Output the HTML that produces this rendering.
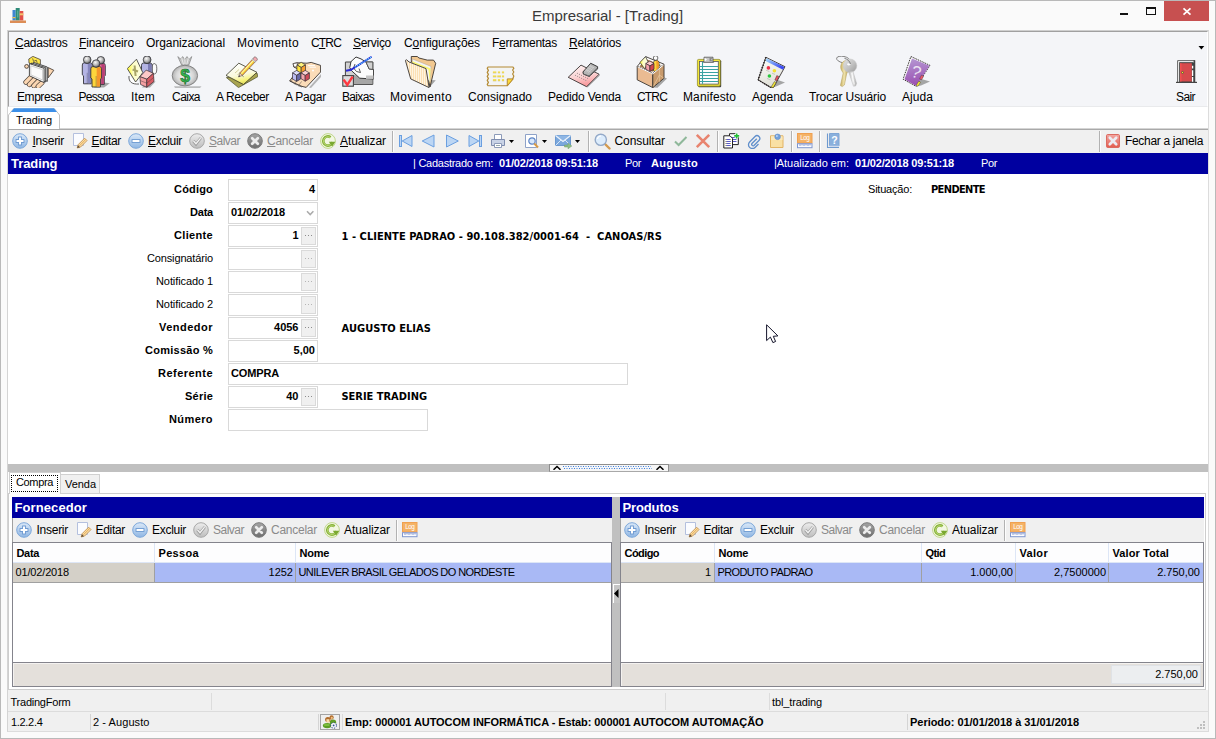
<!DOCTYPE html>
<html lang="pt-BR"><head><meta charset="utf-8"><title>Empresarial - [Trading]</title>
<style>
html,body{margin:0;padding:0}
body{width:1216px;height:739px;overflow:hidden;background:#fafafa;position:relative;font-family:"Liberation Sans",sans-serif}
#w div,#w span.t,#w svg{position:absolute}
#w div{box-sizing:border-box}
span.t{white-space:pre;display:block}
u{text-decoration:underline;text-underline-offset:1px}
</style></head>
<body><div id="w">
<svg width="0" height="0" style="left:0;top:0"><defs>
<linearGradient id="gBlue" x1="0" y1="0" x2="0" y2="1"><stop offset="0" stop-color="#dbe9f8"/><stop offset="1" stop-color="#8fb6e3"/></linearGradient>
<linearGradient id="gGray" x1="0" y1="0" x2="0" y2="1"><stop offset="0" stop-color="#ededed"/><stop offset="1" stop-color="#bdbdbd"/></linearGradient>
<linearGradient id="gDark" x1="0" y1="0" x2="0" y2="1"><stop offset="0" stop-color="#a5a5a5"/><stop offset="1" stop-color="#6d6d6d"/></linearGradient>
<linearGradient id="gGreen" x1="0" y1="0" x2="0" y2="1"><stop offset="0" stop-color="#c9e08a"/><stop offset="1" stop-color="#7fae2e"/></linearGradient>
<linearGradient id="gRed" x1="0" y1="0" x2="0" y2="1"><stop offset="0" stop-color="#f2a8a4"/><stop offset="1" stop-color="#e25c4e"/></linearGradient>
<radialGradient id="gHead" cx="0.4" cy="0.35" r="0.7"><stop offset="0" stop-color="#fafafa"/><stop offset="0.55" stop-color="#b0b0b0"/><stop offset="1" stop-color="#4a4a4a"/></radialGradient>
<radialGradient id="gBag" cx="0.5" cy="0.5" r="0.6"><stop offset="0" stop-color="#fbfbfb"/><stop offset="0.55" stop-color="#d8d8d8"/><stop offset="1" stop-color="#9a9a9a"/></radialGradient>
<linearGradient id="gPaperY" x1="0" y1="0.5" x2="1" y2="0.5"><stop offset="0" stop-color="#fdf828"/><stop offset="0.4" stop-color="#fdfdc8"/><stop offset="1" stop-color="#fdfde4"/></linearGradient>
<linearGradient id="gNote" x1="0.3" y1="0" x2="0.6" y2="1"><stop offset="0" stop-color="#ffffff"/><stop offset="0.55" stop-color="#fafadc"/><stop offset="0.82" stop-color="#f6f274"/><stop offset="1" stop-color="#d4d058"/></linearGradient>
<linearGradient id="gPink" x1="0.3" y1="0" x2="0.6" y2="1"><stop offset="0" stop-color="#fdf0f0"/><stop offset="0.5" stop-color="#fbd4d4"/><stop offset="1" stop-color="#f88e92"/></linearGradient>
<linearGradient id="gPage" x1="0.3" y1="0" x2="0.6" y2="1"><stop offset="0" stop-color="#fbfbf6"/><stop offset="1" stop-color="#deded6"/></linearGradient>
<linearGradient id="gBand" x1="0" y1="0" x2="1" y2="0.5"><stop offset="0" stop-color="#a8dcfa"/><stop offset="1" stop-color="#3a4af4"/></linearGradient>
<linearGradient id="gPurple" x1="0.4" y1="0" x2="0.5" y2="1"><stop offset="0" stop-color="#b496d2"/><stop offset="1" stop-color="#9a4eb0"/></linearGradient>
<linearGradient id="gGold" x1="0" y1="0" x2="1" y2="0"><stop offset="0" stop-color="#c8b060"/><stop offset="0.5" stop-color="#f0e4b0"/><stop offset="1" stop-color="#bca454"/></linearGradient>
<linearGradient id="gSilver" x1="0" y1="0" x2="1" y2="1"><stop offset="0" stop-color="#e4e4e4"/><stop offset="0.55" stop-color="#c0c0c0"/><stop offset="1" stop-color="#9a9a9a"/></linearGradient>
<linearGradient id="gSilver2" x1="0" y1="0" x2="1" y2="0"><stop offset="0" stop-color="#b4b4b4"/><stop offset="0.5" stop-color="#f0f0f0"/><stop offset="1" stop-color="#a8a8a8"/></linearGradient>
<pattern id="pFolder" width="2" height="2" patternUnits="userSpaceOnUse"><rect width="2" height="2" fill="#fef4e0"/><rect width="1" height="2" fill="#fce0b4"/></pattern>
</defs></svg>
<div style="left:0px;top:0px;width:1216px;height:739px;background:#fafafa;border:1px solid #b9b9b9;"></div>
<div style="left:7px;top:30px;width:1202px;height:702px;background:#fff;border:1px solid #dcdcdc;border-top-color:#cfcfcf;border-left-color:#d4d4d4;"></div>
<svg style="left:10px;top:7px" width="16" height="16" viewBox="0 0 16 16"><rect x="2.5" y="3" width="3.2" height="10.5" fill="#3f86d2"/><rect x="2.5" y="10" width="3.2" height="1.2" fill="#f2c14e"/><rect x="5.7" y="1" width="4" height="12.5" fill="#2e8b78"/><rect x="7.4" y="3.5" width="0.8" height="7" fill="#6fc0ad"/><rect x="9.7" y="4" width="3.6" height="9.5" fill="#e2504a"/><rect x="9.7" y="6.3" width="3.6" height="2" fill="#f4c16a"/><rect x="0" y="13.5" width="16" height="2.5" fill="#dc8d55"/></svg>
<div style="left:1120px;top:13px;width:8px;height:2px;background:#111;"></div>
<div style="left:1146px;top:7px;width:10px;height:8px;border:1px solid #111;border-top-width:2px;"></div>
<div style="left:1164px;top:1px;width:45px;height:20px;background:#c75050;"></div>
<svg style="left:1182px;top:7px" width="10" height="9" viewBox="0 0 10 9"><path d="M1.500 1.300L8.500 7.700M8.500 1.300L1.500 7.700" stroke="#fff" stroke-width="1.700" fill="none"/></svg>
<div style="left:8px;top:31px;width:1200px;height:76px;background:#f4f5f8;border:1px solid #a0a0a0;border-right-color:#fff;border-bottom-color:#e9eaec;"></div>
<svg style="left:1198px;top:46px" width="7" height="4" viewBox="0 0 7 4"><path d="M0.500 0H6.300L3.400 3.500Z" fill="#000"/></svg>
<svg style="left:23px;top:56px" width="32" height="32" viewBox="0 0 32 32"><path d="M7.5 21.5L2.8 26.2" stroke="#4a4038" stroke-width="4.9" stroke-linecap="round"/><path d="M7.5 21.5L2.8 26.2" stroke="#fbd6b2" stroke-width="3.6" stroke-linecap="round"/><path d="M11.5 23.2L6.3 28.6" stroke="#4a4038" stroke-width="4.9" stroke-linecap="round"/><path d="M11.5 23.2L6.3 28.6" stroke="#fbd6b2" stroke-width="3.6" stroke-linecap="round"/><path d="M15.5 25L10.8 29.8" stroke="#4a4038" stroke-width="4.9" stroke-linecap="round"/><path d="M15.5 25L10.8 29.8" stroke="#fbd6b2" stroke-width="3.6" stroke-linecap="round"/><path d="M19 26.8L15.2 30.4" stroke="#4a4038" stroke-width="4.9" stroke-linecap="round"/><path d="M19 26.8L15.2 30.4" stroke="#fbd6b2" stroke-width="3.6" stroke-linecap="round"/><circle cx="3.6" cy="10.4" r="1.9" fill="#fbd6b2" stroke="#4a4038" stroke-width="0.9"/><path d="M25.2 11.6L30.8 14.3L25.2 21.8Z" fill="#fbd6b2" stroke="#4a4038" stroke-width="0.9"/><path d="M5.8 3L9.9 0.4L17.4 3.6V8L13.6 9.6L6 7Z" fill="#fde64a" stroke="#4a4038" stroke-width="0.8"/><path d="M9.6 2.4L10.6 5.4L13.3 4.2L14.2 6.8" fill="none" stroke="#4a4038" stroke-width="0.7"/><path d="M10.4 6.3L24.3 11V25.4L10.4 18.6Z" fill="#e4e4e4" stroke="#3a3a3a" stroke-width="0.9"/><path d="M8.4 7L22.7 11.7V26L8.4 19.3Z" fill="#f0f0f0" stroke="#3a3a3a" stroke-width="0.9"/><path d="M6.4 7.6L21.1 12.3V26.6L6.4 19.8Z" fill="#fbfbfb" stroke="#3a3a3a" stroke-width="0.9"/><path d="M7.8 9.8L19.6 13.6V24L7.8 18.8Z" fill="none" stroke="#c8c8c8" stroke-width="0.9"/></svg>
<svg style="left:80px;top:56px" width="32" height="32" viewBox="0 0 32 32"><path d="M20 26L29.8 27.2L24 31.6H14Z" fill="#8a8a8a" opacity="0.75"/><path d="M16.3 9.5Q16.3 7.3 18.3 7.3H23.3Q25.3 7.3 25.3 9.5V19.4L24.3 20.4V28.4H17.5V20.4L16.3 19.4Z" fill="#e66aa0" stroke="#33333a" stroke-width="0.9"/><path d="M21.400000000000002 7.8999999999999995H23.5Q24.7 7.8999999999999995 24.7 9.7V19.4L23.8 20.4V27.9H21.400000000000002Z" fill="#b83f74"/><path d="M20.8 17.4V27.9" stroke="#33333a" stroke-width="0.6" opacity="0.55"/><circle cx="20.8" cy="4.3" r="3.8" fill="url(#gHead)" stroke="#33333a" stroke-width="0.8"/><path d="M2.3 9.0Q2.3 6.8 4.3 6.8H10.100000000000001Q12.100000000000001 6.8 12.100000000000001 9.0V18.8L11.100000000000001 19.8V27.8H3.5V19.8L2.3 18.8Z" fill="#b4b4e4" stroke="#33333a" stroke-width="0.9"/><path d="M7.8 7.3999999999999995H10.3Q11.500000000000002 7.3999999999999995 11.500000000000002 9.2V18.8L10.600000000000001 19.8V27.3H7.8Z" fill="#8585bd"/><path d="M7.2 16.8V27.3" stroke="#33333a" stroke-width="0.6" opacity="0.55"/><circle cx="7.2" cy="3.8" r="3.8" fill="url(#gHead)" stroke="#33333a" stroke-width="0.8"/><path d="M10.8 12.8Q10.8 10.6 12.8 10.6H19.400000000000002Q21.400000000000002 10.6 21.400000000000002 12.8V22L20.400000000000002 23V31H12.0V23L10.8 22Z" fill="#fdd53c" stroke="#33333a" stroke-width="0.9"/><path d="M16.700000000000003 11.2H19.6Q20.8 11.2 20.8 13.0V22L19.900000000000002 23V30.5H16.700000000000003Z" fill="#f5962b"/><path d="M16.1 20V30.5" stroke="#33333a" stroke-width="0.6" opacity="0.55"/><circle cx="16.1" cy="7.6" r="3.8" fill="url(#gHead)" stroke="#33333a" stroke-width="0.8"/></svg>
<svg style="left:127px;top:56px" width="32" height="32" viewBox="0 0 32 32"><path d="M20 25L28.6 25.4L23 31.4H15Z" fill="#8a8a8a" opacity="0.7"/><ellipse cx="27.3" cy="12.8" rx="2.5" ry="5.2" fill="#fbfbfb" stroke="#333" stroke-width="0.7"/><path d="M14.5 9.2Q14.5 7 16.6 7H23Q25.1 7 25.1 9.2V19H14.5Z" fill="#b4b4e4" stroke="#33333a" stroke-width="0.9"/><path d="M21 7.6H23Q24.5 7.6 24.5 9.4V19H21Z" fill="#7c7cb4"/><circle cx="20.1" cy="3.8" r="3.9" fill="url(#gHead)" stroke="#33333a" stroke-width="0.8"/><path d="M2 20C1.5 26 5 28.5 12 28" fill="#fff" stroke="#333" stroke-width="0.8"/><path d="M9.5 3.2L0.3 12.6L8.6 26L15.8 16.6Z" fill="url(#gPaperY)" stroke="#333" stroke-width="0.8"/><path d="M7.6 9.5L8.6 20M5.6 13.5L11 15.5" stroke="#a8a468" stroke-width="2"/><path d="M12.9 20.7L19.2 14.1L26.4 17.3L19.8 23.2Z" fill="#fcc8c8" stroke="#3a3036" stroke-width="0.7"/><path d="M12.9 20.7L19.8 23.2V31.3L13.6 28.5Z" fill="#f4a0a2" stroke="#3a3036" stroke-width="0.7"/><path d="M19.8 23.2L26.4 17.3L27 25.4L19.8 31.3Z" fill="#d85c64" stroke="#3a3036" stroke-width="0.7"/><path d="M13.3 24.6L19.8 27.2L26.7 21.4" fill="none" stroke="#3a3036" stroke-width="0.6" opacity="0.7"/></svg>
<svg style="left:170px;top:56px" width="32" height="32" viewBox="0 0 32 32"><path d="M4 30.2H31.5L30 32H5Z" fill="#8c8c8c" opacity="0.55"/><path d="M7.8 0.6L10.5 3L12.6 0.6L14.8 3.4L17 0.6L19.2 3.2L21.8 0.6L18.8 9H11.6Z" fill="#c4c4c4" stroke="#808080" stroke-width="0.7"/><path d="M11.5 1.5L13.5 8.5M14.8 2L15 8.5M18.5 1.5L16.8 8.5" stroke="#fff" stroke-width="0.8" opacity="0.8"/><ellipse cx="14.9" cy="19.6" rx="12.7" ry="10.3" fill="url(#gBag)" stroke="#7c7c7c" stroke-width="0.9"/><text x="15" y="25.900" font-family="Liberation Sans,sans-serif" font-size="17.500" font-weight="bold" fill="#34b84c" stroke="#1c6a30" stroke-width="0.6" text-anchor="middle">$</text></svg>
<svg style="left:226px;top:56px" width="32" height="32" viewBox="0 0 32 32"><path d="M0.4 21.6L12.5 31.6L31.9 20.6L31 17Z" fill="#a8a450" stroke="#4a4a28" stroke-width="0.7"/><path d="M0 19.4L12.8 7.2L30.9 16.3L17.5 28.5Z" fill="url(#gNote)" stroke="#333322" stroke-width="0.8"/><path d="M9 17L13 13.5M11.5 19L14.5 16" stroke="#b8b468" stroke-width="0.6"/><path d="M14.5 18.5L18 21" stroke="#666" stroke-width="0.5"/><g transform="rotate(-47 12.5 21)"><path d="M12.5 21L16.6 19.1V22.9Z" fill="#f8c8b0" stroke="#555" stroke-width="0.5"/><path d="M12.5 21L14.3 20.2V21.8Z" fill="#333"/><rect x="16.6" y="19.1" width="18.6" height="3.8" fill="#f6a63a" stroke="#555" stroke-width="0.5"/><rect x="16.6" y="20.3" width="18.6" height="1.4" fill="#f8f048"/><rect x="16.6" y="20.2" width="18.6" height="0.5" fill="#fff"/><rect x="35.2" y="18.9" width="3.6" height="4.2" rx="1.4" fill="#f4a8b0" stroke="#666" stroke-width="0.6"/><rect x="34.4" y="19" width="1.2" height="4" fill="#e8e8e8" stroke="#777" stroke-width="0.3"/></g></svg>
<svg style="left:289px;top:56px" width="32" height="32" viewBox="0 0 32 32"><path d="M20 31.6L32 18V21L22 32Z" fill="#8a8a8a" opacity="0.6"/><path d="M4.1 7.6L8 6.8L18 7.2L22.2 6.4L31.6 9.4V16L17.2 31.4L13 30.4L0.6 25L4 20.5L9 13L4.8 11Z" fill="#fbdcb8" stroke="#3a3430" stroke-width="0.9"/><path d="M4.1 7.6L8.5 7L9.5 10.5L5 11Z" fill="#fff" stroke="#3a3430" stroke-width="0.6"/><path d="M19 9.6H26M20.5 11.2H27" stroke="#fff" stroke-width="1" opacity="0.9"/><circle cx="24" cy="14.6" r="1" fill="#fff"/><path d="M1 24.6L4.4 26.8M4.6 27.4L8.6 29.2M9 29.6L13 31" stroke="#3a3430" stroke-width="0.6"/><path d="M4.5 22L2 25.4M8.5 23.6L5.4 27.6M12.6 25.4L9.6 29.6" stroke="#3a3430" stroke-width="0.6" opacity="0.7"/><path d="M12.2 6.3L16.5 8.879999999999999L12.2 11.459999999999999L7.8999999999999995 8.879999999999999Z" fill="#fff27a" stroke="#3a3036" stroke-width="0.7"/><path d="M7.8999999999999995 8.879999999999999L12.2 11.459999999999999V18.1L7.8999999999999995 15.520000000000001Z" fill="#ffe53a" stroke="#3a3036" stroke-width="0.7"/><path d="M16.5 8.879999999999999L12.2 11.459999999999999V18.1L16.5 15.520000000000001Z" fill="#f8a02e" stroke="#3a3036" stroke-width="0.7"/><path d="M7.6 14.4L11.7 16.86L7.6 19.32L3.5 16.86Z" fill="#dcdcfa" stroke="#3a3036" stroke-width="0.7"/><path d="M3.5 16.86L7.6 19.32V25.4L3.5 22.939999999999998Z" fill="#bcbcf2" stroke="#3a3036" stroke-width="0.7"/><path d="M11.7 16.86L7.6 19.32V25.4L11.7 22.939999999999998Z" fill="#6a6aa8" stroke="#3a3036" stroke-width="0.7"/><path d="M16.2 14.4L20.4 16.92L16.2 19.44L12.0 16.92Z" fill="#fad0d4" stroke="#3a3036" stroke-width="0.7"/><path d="M12.0 16.92L16.2 19.44V25.200000000000003L12.0 22.680000000000003Z" fill="#f2a6ae" stroke="#3a3036" stroke-width="0.7"/><path d="M20.4 16.92L16.2 19.44V25.200000000000003L20.4 22.680000000000003Z" fill="#d04a58" stroke="#3a3036" stroke-width="0.7"/></svg>
<svg style="left:342px;top:56px" width="32" height="32" viewBox="0 0 32 32"><path d="M3.4 6H30.8V28.4H3.4Z" fill="#d2d2d2" stroke="#444" stroke-width="1"/><path d="M12 19L30.3 23V27.9H12Z" fill="#a6a6a6"/><path d="M7.75 11.6L9 5.6L14 1L19 2.9L24 6L27.1 12.9L31.6 13.6V23L17.75 22.2L9.6 14.75Z" fill="#fcfcfc" stroke="#222" stroke-width="0.9"/><path d="M24 6H30.8V13.4L27.1 12.9Z" fill="#d2d2d2" stroke="#444" stroke-width="0.8"/><path d="M24 19.5H31.5V22.9H24Z" fill="#c4c4c4"/><path d="M13 8L11.5 12L14.5 15.5L18.5 16.5L17 12.5" fill="none" stroke="#333" stroke-width="0.8"/><path d="M29.6 0.8L9 13.8L4 14.75" stroke="#2a2ad8" stroke-width="1.900" fill="none"/><path d="M29 1.2L13 11.3" stroke="#58ecfc" stroke-width="1.100" stroke-dasharray="1.200 1"/><rect x="0.8" y="19.6" width="10.6" height="10.6" fill="#dcdcdc" stroke="#444" stroke-width="1.1"/><path d="M1.6 23.6L5.3 28.8L10.6 20.6" stroke="#ff3840" stroke-width="2.4" fill="none"/></svg>
<svg style="left:405px;top:56px" width="32" height="32" viewBox="0 0 32 32"><path d="M25 24L30.8 24.2L24.4 31.6Z" fill="#8a8a8a" opacity="0.75"/><path d="M6.3 0.5H12.25L14 2L22.25 4.1H28.5L30.7 7.25L25 31L21 12.6L6.3 6Z" fill="#f2c890" stroke="#3a3430" stroke-width="0.9"/><path d="M7.25 2.9L26 10.4L25 26L8 8Z" fill="#f4f4f4" stroke="#999" stroke-width="0.4"/><path d="M7.4 5.2L25.6 12.4L25 27L23.4 13.4L7.4 7Z" fill="#fcf870"/><path d="M0.4 4.4L1.6 3.8L4.1 6L21 12.6L24.1 31.6L5.7 22.9Z" fill="url(#pFolder)" stroke="#3a3430" stroke-width="0.9"/></svg>
<svg style="left:484px;top:56px" width="32" height="32" viewBox="0 0 32 32"><path d="M4 11H29L29.8 12.4L28.6 14L29.8 16L28.6 18L29.8 20L28.8 22.9L23.25 29.75H4L3.25 28.4L4.4 26.4L3.25 24.4L4.4 22.4L3.25 20.4L4.4 18.4L3.25 16.4L4.4 14.4L3.25 12.4Z" fill="#f3f4f3" stroke="#b48a34" stroke-width="1.2" stroke-linejoin="round"/><path d="M23.25 29.75V22.9H29.2Z" fill="#fdd93a" stroke="#b48a34" stroke-width="1"/><path d="M8.9 16.1H12.3M13.9 16.1H16.1M17.9 16.1H20.1M8.9 20.1H12.3M13.3 20.1H17M17.9 20.1H20.1M8.9 24H12.3M13.9 24H16.1M17.9 24H20.1" stroke="#f6da2a" stroke-width="1.4"/><path d="M8.9 17.1H12.3M13.9 17.1H16.1M17.9 17.1H20.1M8.9 21.1H12.3M13.3 21.1H17M17.9 21.1H20.1M8.9 25H12.3M13.9 25H16.1M17.9 25H20.1" stroke="#b8a040" stroke-width="0.5" opacity="0.7"/></svg>
<svg style="left:568px;top:56px" width="32" height="32" viewBox="0 0 32 32"><path d="M18.6 30.7L31.4 18.4L31.8 19.4L19.4 31.6Z" fill="#7a7a7a" opacity="0.7"/><path d="M0.2 21.3L13 9.1L31.1 18.2L18.6 30.7Z" fill="url(#gPink)" stroke="#3a3434" stroke-width="0.9"/><g fill="#8a8080"><circle cx="7.5" cy="19.2" r="0.55"/><circle cx="9.4" cy="17.3" r="0.55"/><circle cx="9.6" cy="20.2" r="0.55"/><circle cx="11.5" cy="18.3" r="0.55"/><circle cx="11.6" cy="21.2" r="0.55"/><circle cx="13.5" cy="19.3" r="0.55"/><circle cx="15.4" cy="17.4" r="0.55"/><circle cx="17.3" cy="15.5" r="0.55"/><circle cx="13.6" cy="22.2" r="0.55"/><circle cx="15.5" cy="20.3" r="0.55"/><circle cx="17.4" cy="18.4" r="0.55"/><circle cx="19.3" cy="16.5" r="0.55"/><circle cx="15.7" cy="23.2" r="0.55"/><circle cx="17.6" cy="21.3" r="0.55"/><circle cx="19.5" cy="19.4" r="0.55"/><circle cx="21.4" cy="17.5" r="0.55"/><circle cx="17.8" cy="24.2" r="0.55"/><circle cx="19.6" cy="22.3" r="0.55"/><circle cx="21.6" cy="20.4" r="0.55"/><circle cx="23.4" cy="18.5" r="0.55"/></g><path d="M14.9 16L22.7 7.25L29.6 10.7V12.9L21.1 20.4L15.5 18.2Z" fill="#b4b4b4" stroke="#222" stroke-width="0.9"/><path d="M15.2 17.4L21 19.6L29.4 11.4V12.9L21.1 20.4L15.5 18.2Z" fill="#6c6c6c"/><path d="M17 15.6L23 9M18.6 16.2L24.6 9.8M20.2 16.8L26.2 10.6M17.5 13.6L22.6 15.8M19.3 11.6L24.4 13.8M21 9.8L26.2 12" stroke="#e8e8e8" stroke-width="0.5" opacity="0.8"/></svg>
<svg style="left:636px;top:56px" width="32" height="32" viewBox="0 0 32 32"><path d="M17 31.6L28.4 21.6L31 22.4L21.5 31.8Z" fill="#8a8a8a" opacity="0.75"/><path d="M1.2 10.4L9.6 0.6L28 8.2L16.8 17.6Z" fill="#fff" stroke="#3a3430" stroke-width="0.9"/><path d="M3.4 10.6L9.8 3L25 9L16.6 15.8Z" fill="#a87848"/><path d="M4 6.3L9.6 0.7L12.1 6L8.7 12.9Z" fill="url(#gPaperY)" stroke="#333" stroke-width="0.7"/><path d="M17.4 6.2L19 4.2H21.4L23 6.2V14.75L20 16L17.4 14.75Z" fill="#fdd53c" stroke="#333" stroke-width="0.7"/><path d="M20.4 4.6H21.4L22.6 6.4V14.4L20.4 15.4Z" fill="#f59a2a"/><circle cx="19.6" cy="2" r="2.3" fill="#fbfbfb" stroke="#333" stroke-width="0.7"/><path d="M13.9 5L18.0 7.459999999999999L13.9 9.919999999999998L9.8 7.459999999999999Z" fill="#fbc8cc" stroke="#3a3036" stroke-width="0.7"/><path d="M9.8 7.459999999999999L13.9 9.919999999999998V15.6L9.8 13.14Z" fill="#f6a0a8" stroke="#3a3036" stroke-width="0.7"/><path d="M18.0 7.459999999999999L13.9 9.919999999999998V15.6L18.0 13.14Z" fill="#d2444e" stroke="#3a3036" stroke-width="0.7"/><path d="M1.2 10.4L16.8 17.6V31.6L1.2 23.8Z" fill="#eabb92" stroke="#3a3430" stroke-width="0.9"/><path d="M16.8 17.6L28 8.2V22.25L16.8 31.6Z" fill="#c89a6c" stroke="#3a3430" stroke-width="0.9"/><path d="M23.4 12.4V25.8M23.4 19L27.6 22M23.4 19L17.4 30.4" stroke="#e8c8a0" stroke-width="0.7" fill="none"/><path d="M1.6 10.8L16.8 17.9L27.6 8.9" stroke="#fff" stroke-width="1" fill="none"/></svg>
<svg style="left:693px;top:56px" width="32" height="32" viewBox="0 0 32 32"><rect x="5.2" y="4.2" width="23" height="27" rx="1" fill="#444"/><rect x="4.4" y="3.4" width="22.8" height="26.8" rx="1.2" fill="#f4e838" stroke="#8a8420" stroke-width="0.7"/><rect x="6.5" y="5.5" width="18.8" height="22.6" fill="#fdfdfd" stroke="#555" stroke-width="0.8"/><path d="M7 10.5H25M7 13.5H25M7 16.5H25M7 19.5H25M7 22.5H25M7 25.5H25" stroke="#3aa2a2" stroke-width="1.2"/><path d="M9.5 6V27.8" stroke="#3aa2a2" stroke-width="1.1"/><path d="M11 1.2H20V5.6L20.6 6.4H10.4L11 5.6Z" fill="#c6c6c6" stroke="#444" stroke-width="0.7"/><path d="M11.6 1.8L14 3.6L11.6 5.4Z" fill="#fff"/><path d="M16.5 2H19.4L18 3.6L19.4 5.2H16.5Z" fill="#8a8a8a"/></svg>
<svg style="left:756px;top:56px" width="32" height="32" viewBox="0 0 32 32"><path d="M20.5 23.6L29 26.6L20 30.6L16 31.4Z" fill="#8a8a8a" opacity="0.75"/><path d="M9.9 1.3L29 10.7L17.4 31.6L14.9 31.6L2.1 23.8Z" fill="url(#gPage)" stroke="#3a3434" stroke-width="0.9"/><path d="M10.6 2.3L28.4 11L27 13.8L9.6 5Z" fill="url(#gBand)"/><path d="M9.9 1.3L2.1 23.8" stroke="#2a2424" stroke-width="1.7" stroke-dasharray="1.1 1.5"/><path d="M2.1 23.8L14.9 31.6" stroke="#2a2424" stroke-width="1.3" stroke-dasharray="1.4 0.9"/><circle cx="12.4" cy="11.9" r="1.8" fill="#ee3048"/><circle cx="18.4" cy="14.8" r="1.8" fill="#f4e030"/><circle cx="13.4" cy="20" r="1.8" fill="#28c83a"/><path d="M10 14.2L13.4 15.6M16 17.2L19 18.4M11 22.4L14.4 24" stroke="#b8b8b0" stroke-width="0.7"/><path d="M20.8 19.6L22.9 20.6L20.8 25L18.9 24Z" fill="#f05060" stroke="#3a3434" stroke-width="0.5"/><path d="M18.4 25.6L20.2 26.6L17.4 31.4L14.9 31.4Z" fill="#f4e838" stroke="#3a3434" stroke-width="0.5"/></svg>
<svg style="left:831px;top:56px" width="32" height="32" viewBox="0 0 32 32"><ellipse cx="12.3" cy="3.6" rx="6.8" ry="3.2" fill="none" stroke="#7c7c7c" stroke-width="0.9" transform="rotate(12 12.3 3.6)"/><path d="M14.5 4.6C10 5.5 8.6 11 10.6 14.4L12.2 17L9.4 29.6L11.2 30.6L13.4 29L15.6 18L17 15Z" fill="url(#gGold)" stroke="#b09a58" stroke-width="0.5"/><circle cx="19" cy="9.8" r="6.8" fill="url(#gSilver)" stroke="#c4c4c4" stroke-width="0.5"/><path d="M17.6 15.6L22 15.6L25.6 27.4L24.6 30L22.4 30.2L21.4 27Z" fill="url(#gSilver2)" stroke="#b8b8b8" stroke-width="0.5"/><path d="M20.6 17L23.4 28.4" stroke="#fff" stroke-width="0.9" opacity="0.8"/><ellipse cx="17.8" cy="8.3" rx="1.8" ry="1.1" fill="#fbfbfb"/><path d="M13.5 2.4C16.5 3 19 5.4 19.4 8" fill="none" stroke="#7c7c7c" stroke-width="1"/></svg>
<svg style="left:901px;top:56px" width="32" height="32" viewBox="0 0 32 32"><path d="M20.4 23L29 25.4L20 29.4L15.5 30.4Z" fill="#8a8a8a" opacity="0.75"/><path d="M9.9 0.5L29 9.4L15.25 30.4L2.1 23.2Z" fill="#fbfbfb" stroke="#2a2424" stroke-width="0.9" stroke-dasharray="1.6 0.9"/><path d="M11 2.400L28.600 9.800L15.200 29.900L3.500 23.300Z" fill="url(#gPurple)"/><text x="15.4" y="22" font-family="Liberation Sans,sans-serif" font-size="17" fill="#ece4f2" text-anchor="middle" transform="rotate(17 15.4 16)">?</text><path d="M20.4 19.2L22.6 20.2L20.6 23.8L18.6 22.8Z" fill="#f05868" stroke="#3a3434" stroke-width="0.4"/><path d="M17.8 25.2L19.6 26.2L17 30.2L15 29.6Z" fill="#f4ec38" stroke="#3a3434" stroke-width="0.4"/></svg>
<svg style="left:1170px;top:56px" width="32" height="32" viewBox="0 0 32 32"><path d="M7.6 26V4.6H24.6V26" fill="#f6f6f6" stroke="#666" stroke-width="1"/><path d="M24.4 4.2V26" stroke="#444" stroke-width="1.6"/><rect x="9.7" y="6.7" width="12.6" height="19.4" fill="#d64a4c" stroke="#3c4444" stroke-width="1"/><rect x="10.2" y="7.2" width="1.2" height="18.6" fill="#fb5454"/><rect x="22" y="6.4" width="2" height="19.8" fill="#3c4444"/><path d="M22.6 9.8V12.6M22.6 14.2V19.9M22.6 21V25.9" stroke="#fff" stroke-width="1.3"/><circle cx="12.5" cy="16.5" r="1" fill="#f4f020" stroke="#333a4a" stroke-width="0.6"/><path d="M6 26.4H27" stroke="#444" stroke-width="1.2"/></svg>
<div style="left:8px;top:107px;width:1200px;height:22px;background:#fff;"></div>
<svg style="left:7px;top:108px" width="54" height="22" viewBox="0 0 54 22">
<path d="M1.500 21.500V7L6.500 0.800H47.500L52.500 7V21.500" fill="#fff" stroke="#c3c3c3"/>
<path d="M4 4L7 0.300H47L50 4Z" fill="#3c8fe8"/></svg>
<div style="left:60px;top:128px;width:1148px;height:1px;background:#d5d5d5;"></div>
<div style="left:8px;top:129px;width:1200px;height:24px;background:#f0f0f0;border-top:1px solid #a9a9a9;border-left:1px solid #a0a0a0;"></div>
<svg style="left:12px;top:133px" width="16" height="16" viewBox="0 0 16 16"><circle cx="8" cy="8" r="7.3" fill="url(#gBlue)" stroke="#7ea8da" stroke-width="1"/><path d="M8 3.6V12.4M3.6 8H12.4" stroke="#6f9bd2" stroke-width="3.8"/><path d="M8 4.5V11.5M4.5 8H11.5" stroke="#fff" stroke-width="2"/></svg>
<svg style="left:72px;top:133px" width="16" height="16" viewBox="0 0 16 16"><path d="M1.5 0.5H11.5V12.5H1.5Z" fill="#fbfcff" stroke="#b4c0de"/><path d="M5.2 15L6.2 11.6L12.6 5.2L15 7.6L8.6 14Z" fill="#f8dca8" stroke="#c08a40" stroke-width="0.8"/><path d="M7.4 12.8L13.8 6.4" stroke="#e8a848" stroke-width="0.9"/><path d="M5.2 15L6 12.2L8 14.2Z" fill="#5a4a3a"/></svg>
<svg style="left:128px;top:133px" width="16" height="16" viewBox="0 0 16 16"><circle cx="8" cy="8" r="7.3" fill="url(#gBlue)" stroke="#7ea8da" stroke-width="1"/><path d="M3.6 8H12.4" stroke="#6f9bd2" stroke-width="3.8"/><path d="M4.5 8H11.5" stroke="#fff" stroke-width="2"/></svg>
<svg style="left:189px;top:133px" width="16" height="16" viewBox="0 0 16 16"><circle cx="8" cy="8" r="7.3" fill="url(#gGray)" stroke="#a8a8a8"/><path d="M4.3 8L7 11L11.8 5" stroke="#9c9c9c" stroke-width="2.8" fill="none"/><path d="M4.5 8L7 10.7L11.6 5.2" stroke="#f4f4f4" stroke-width="1.3" fill="none"/></svg>
<svg style="left:247px;top:133px" width="16" height="16" viewBox="0 0 16 16"><circle cx="8" cy="8" r="7.3" fill="url(#gDark)" stroke="#7a7a7a"/><path d="M5.2 5.2L10.8 10.8M10.8 5.2L5.2 10.8" stroke="#ececec" stroke-width="2.7" stroke-linecap="round"/></svg>
<svg style="left:320px;top:133px" width="16" height="16" viewBox="0 0 16 16"><circle cx="8" cy="8" r="7.4" fill="#f2f7e2" stroke="#b4cf74" stroke-width="0.8"/><path d="M12.4 9A4.6 4.6 0 1 1 10.6 4.3" stroke="#86b238" stroke-width="2.6" fill="none"/><path d="M12.2 9A4.4 4.4 0 1 1 10.4 4.5" stroke="#c4de84" stroke-width="0.8" fill="none"/><path d="M8.8 8.8H15.4L12.2 13.6Z" fill="#7aa830"/></svg>
<div style="left:392px;top:131px;width:1px;height:21px;background:#b2b2b2;"></div>
<div style="left:393px;top:131px;width:1px;height:21px;background:#fdfdfd;"></div>
<svg style="left:398px;top:133px" width="16" height="16" viewBox="0 0 16 16"><rect x="1.5" y="2.5" width="2" height="11" fill="#bcd6f4" stroke="#6a9fe0"/><path d="M14 2.5V13.5L4.2 8Z" fill="#bcd6f4" stroke="#6a9fe0"/></svg>
<svg style="left:420px;top:133px" width="16" height="16" viewBox="0 0 16 16"><path d="M14 2V14L2.2 8Z" fill="#bcd6f4" stroke="#6a9fe0"/></svg>
<svg style="left:444px;top:133px" width="16" height="16" viewBox="0 0 16 16"><path d="M2.5 2V14L14.3 8Z" fill="#bcd6f4" stroke="#6a9fe0"/></svg>
<svg style="left:467px;top:133px" width="16" height="16" viewBox="0 0 16 16"><rect x="12.5" y="2.5" width="2" height="11" fill="#bcd6f4" stroke="#6a9fe0"/><path d="M2 2.5V13.5L11.800 8Z" fill="#bcd6f4" stroke="#6a9fe0"/></svg>
<svg style="left:490px;top:133px" width="16" height="16" viewBox="0 0 16 16"><path d="M4.5 1.5H11.5V6.5H4.5Z" fill="#fff" stroke="#8c9ab8"/><path d="M1.5 6.5H14.5V12.5H1.5Z" fill="#c9d3e6" stroke="#7f8daf"/><path d="M4.5 10.5H11.5V14.5H4.5Z" fill="#fff" stroke="#8c9ab8"/><path d="M6 12.5H10" stroke="#9aa" stroke-width="1"/></svg>
<svg style="left:509px;top:140px" width="5" height="3" viewBox="0 0 5 3"><path d="M0 0H5L2.5 3Z" fill="#000"/></svg>
<svg style="left:524px;top:133px" width="16" height="16" viewBox="0 0 16 16"><path d="M1.5 1.5H12.5V14.5H1.5Z" fill="#fff" stroke="#8ea2c8"/><circle cx="8" cy="8" r="3.2" fill="#d8e8fb" stroke="#5f86c6" stroke-width="1.2"/><path d="M10.3 10.5L14 14.5" stroke="#d89a45" stroke-width="2"/></svg>
<svg style="left:542px;top:140px" width="5" height="3" viewBox="0 0 5 3"><path d="M0 0H5L2.5 3Z" fill="#000"/></svg>
<svg style="left:555px;top:133px" width="18" height="16" viewBox="0 0 18 16"><path d="M0.5 2.5H15.5V12.5H0.5Z" fill="#7aa7dc" stroke="#6a98d0"/><path d="M0.5 2.5L8 8.5L15.5 2.5" fill="#8eb6e4" stroke="#eef4fc" stroke-width="1.1"/><path d="M0.5 12.5L6 7M15.5 12.500L10 7" stroke="#e2ecf8" stroke-width="0.9"/><path d="M9.500 12H13V10.200L16.800 13L13 15.800V14H9.500Z" fill="#8cbc84" stroke="#6c9c6c" stroke-width="0.5"/></svg>
<svg style="left:575px;top:140px" width="5" height="3" viewBox="0 0 5 3"><path d="M0 0H5L2.5 3Z" fill="#000"/></svg>
<div style="left:588px;top:131px;width:1px;height:21px;background:#b2b2b2;"></div>
<div style="left:589px;top:131px;width:1px;height:21px;background:#fdfdfd;"></div>
<svg style="left:594px;top:133px" width="17" height="17" viewBox="0 0 17 17"><path d="M10.5 10.5L15.5 15.5" stroke="#d49a4e" stroke-width="2.4" stroke-linecap="round"/><circle cx="6.8" cy="6.8" r="5.6" fill="#dcecfc" stroke="#93a9c8" stroke-width="1.4"/><path d="M3.5 6A3.5 3.5 0 0 1 7 3" stroke="#fff" stroke-width="1.2" fill="none"/></svg>
<svg style="left:673px;top:133px" width="16" height="16" viewBox="0 0 16 16"><path d="M2 8.500L5.600 12L13.500 4" stroke="#8fb89a" stroke-width="2" fill="none"/></svg>
<svg style="left:695px;top:133px" width="16" height="16" viewBox="0 0 16 16"><path d="M1.800 1.800L14.200 14.200M14.200 1.800L1.800 14.200" stroke="#e8846f" stroke-width="2.600" fill="none"/></svg>
<div style="left:717px;top:131px;width:1px;height:21px;background:#b2b2b2;"></div>
<div style="left:718px;top:131px;width:1px;height:21px;background:#fdfdfd;"></div>
<svg style="left:723px;top:133px" width="17" height="16" viewBox="0 0 17 16"><path d="M6.500 0.700H12.500L15.300 3.500V11.600H6.500Z" fill="#fff" stroke="#222" stroke-width="1"/><path d="M8.500 4.500H13.500M8.500 6.500H13.500M8.500 8.500H13.500" stroke="#4848c0" stroke-width="0.9"/><path d="M0.800 2.800H7L9.500 5.300V15H0.800Z" fill="#fff" stroke="#222" stroke-width="1"/><path d="M2.500 6.500H7.800M2.500 8.500H7.800M2.500 10.500H7.800M2.500 12.500H7.800" stroke="#4848c0" stroke-width="0.9"/><path d="M2.500 6.500H3.300M2.500 8.500H3.300M2.500 10.500H3.300M2.500 12.500H3.300M7 6.500H7.800M7 10.500H7.800" stroke="#e8d838" stroke-width="0.9"/><path d="M13.700 0.200V5.600M11 2.900H16.400" stroke="#fff" stroke-width="2.800"/><path d="M13.700 0.400V5.400M11.200 2.900H16.200" stroke="#22c034" stroke-width="1.600"/></svg>
<svg style="left:746px;top:133px" width="16" height="16" viewBox="0 0 16 16"><g transform="translate(1.200 1.800) scale(0.870)"><path d="M11 4.500L5.500 10A1.600 1.600 0 0 0 7.800 12.200L13.500 6.500A3.100 3.100 0 0 0 9 2L2.800 8.200A4.400 4.400 0 0 0 9 14.500L13 10.500" stroke="#5f8ecb" stroke-width="1.500" fill="none"/></g></svg>
<svg style="left:769px;top:133px" width="16" height="16" viewBox="0 0 16 16"><path d="M1.500 2.800H14V14.500H1.500Z" fill="#f9e0a4" stroke="#e2b464"/><path d="M2 3.300H13.500V7H2Z" fill="#fbe9bc"/><circle cx="8.600" cy="3.800" r="2.800" fill="#74a2dc" stroke="#5a88c8" stroke-width="0.600"/><circle cx="7.900" cy="3" r="0.900" fill="#c8dcf4"/></svg>
<div style="left:791px;top:131px;width:1px;height:21px;background:#b2b2b2;"></div>
<div style="left:792px;top:131px;width:1px;height:21px;background:#fdfdfd;"></div>
<svg style="left:797px;top:133px" width="16" height="16" viewBox="0 0 16 16"><rect x="0.500" y="0.500" width="14.500" height="9.500" fill="#f4b266" stroke="#f0a050"/><text x="7.800" y="7.400" font-family="Liberation Sans,sans-serif" font-size="6.400" fill="#ffffff" text-anchor="middle" letter-spacing="-0.45">Log</text><rect x="0.500" y="10.700" width="14.500" height="4" fill="#fbfcff" stroke="#7f96cf"/><path d="M3 11V13M5 11V12.500M7 11V13M9 11V12.500M11 11V13M13 11V12.500" stroke="#6c84c4" stroke-width="0.8"/></svg>
<div style="left:819px;top:131px;width:1px;height:21px;background:#b2b2b2;"></div>
<div style="left:820px;top:131px;width:1px;height:21px;background:#fdfdfd;"></div>
<svg style="left:826px;top:133px" width="14" height="16" viewBox="0 0 14 16"><path d="M3.500 0.500H13V13H3.500Z" fill="#8ab0dc" stroke="#7ea6d6"/><path d="M1.500 0.500V14.500H13" fill="none" stroke="#6f9acf" stroke-width="1.100"/><path d="M3 13.200H13" stroke="#dfe9f6" stroke-width="0.8"/><text x="8.400" y="11.200" font-family="Liberation Sans,sans-serif" font-size="10.500" font-weight="bold" fill="#fff" text-anchor="middle">?</text></svg>
<div style="left:1099px;top:131px;width:1px;height:21px;background:#b2b2b2;"></div>
<div style="left:1100px;top:131px;width:1px;height:21px;background:#fdfdfd;"></div>
<svg style="left:1106px;top:134px" width="14" height="14" viewBox="0 0 14 14"><rect x="0.500" y="0.500" width="13" height="13" rx="1.200" fill="url(#gRed)" stroke="#dc6a60"/><path d="M3.800 3.800L10.200 10.200M10.200 3.800L3.800 10.200" stroke="#ececf2" stroke-width="2.700" stroke-linecap="round"/></svg>
<div style="left:8px;top:153px;width:1200px;height:21px;background:#0000a0;"></div>
<div style="left:8px;top:174px;width:1200px;height:290px;background:#fff;"></div>
<div style="left:228px;top:179px;width:90px;height:22px;background:#fff;border:1px solid #d9d9d9;"></div>
<div style="left:228px;top:202px;width:90px;height:22px;background:#fff;border:1px solid #d9d9d9;"></div>
<div style="left:228px;top:225px;width:90px;height:22px;background:#fff;border:1px solid #d9d9d9;"></div>
<div style="left:301px;top:227px;width:15px;height:18px;background:#f0f0f0;border:1px solid #dadada;"></div>
<div style="left:305px;top:235px;width:1px;height:1px;background:#8c8c8c;"></div>
<div style="left:308px;top:235px;width:1px;height:1px;background:#8c8c8c;"></div>
<div style="left:311px;top:235px;width:1px;height:1px;background:#8c8c8c;"></div>
<div style="left:228px;top:248px;width:90px;height:22px;background:#fff;border:1px solid #d9d9d9;"></div>
<div style="left:301px;top:250px;width:15px;height:18px;background:#f0f0f0;border:1px solid #dadada;"></div>
<div style="left:305px;top:258px;width:1px;height:1px;background:#b5b5b5;"></div>
<div style="left:308px;top:258px;width:1px;height:1px;background:#b5b5b5;"></div>
<div style="left:311px;top:258px;width:1px;height:1px;background:#b5b5b5;"></div>
<div style="left:228px;top:271px;width:90px;height:22px;background:#fff;border:1px solid #d9d9d9;"></div>
<div style="left:301px;top:273px;width:15px;height:18px;background:#f0f0f0;border:1px solid #dadada;"></div>
<div style="left:305px;top:281px;width:1px;height:1px;background:#b5b5b5;"></div>
<div style="left:308px;top:281px;width:1px;height:1px;background:#b5b5b5;"></div>
<div style="left:311px;top:281px;width:1px;height:1px;background:#b5b5b5;"></div>
<div style="left:228px;top:294px;width:90px;height:22px;background:#fff;border:1px solid #d9d9d9;"></div>
<div style="left:301px;top:296px;width:15px;height:18px;background:#f0f0f0;border:1px solid #dadada;"></div>
<div style="left:305px;top:304px;width:1px;height:1px;background:#b5b5b5;"></div>
<div style="left:308px;top:304px;width:1px;height:1px;background:#b5b5b5;"></div>
<div style="left:311px;top:304px;width:1px;height:1px;background:#b5b5b5;"></div>
<div style="left:228px;top:317px;width:90px;height:22px;background:#fff;border:1px solid #d9d9d9;"></div>
<div style="left:301px;top:319px;width:15px;height:18px;background:#f0f0f0;border:1px solid #dadada;"></div>
<div style="left:305px;top:327px;width:1px;height:1px;background:#8c8c8c;"></div>
<div style="left:308px;top:327px;width:1px;height:1px;background:#8c8c8c;"></div>
<div style="left:311px;top:327px;width:1px;height:1px;background:#8c8c8c;"></div>
<div style="left:228px;top:340px;width:90px;height:22px;background:#fff;border:1px solid #d9d9d9;"></div>
<div style="left:228px;top:363px;width:400px;height:22px;background:#fff;border:1px solid #d9d9d9;"></div>
<div style="left:228px;top:386px;width:90px;height:22px;background:#fff;border:1px solid #d9d9d9;"></div>
<div style="left:301px;top:388px;width:15px;height:18px;background:#f0f0f0;border:1px solid #dadada;"></div>
<div style="left:305px;top:396px;width:1px;height:1px;background:#8c8c8c;"></div>
<div style="left:308px;top:396px;width:1px;height:1px;background:#8c8c8c;"></div>
<div style="left:311px;top:396px;width:1px;height:1px;background:#8c8c8c;"></div>
<div style="left:228px;top:409px;width:200px;height:22px;background:#fff;border:1px solid #d9d9d9;"></div>
<svg style="left:306px;top:210px" width="9" height="7" viewBox="0 0 9 7"><path d="M1 1.200L4.200 4.600L7.400 1.200" stroke="#ababab" stroke-width="1.5" fill="none"/></svg>
<svg style="left:766px;top:324px" width="13" height="20" viewBox="0 0 13 20"><path d="M0.6 0.800V16.600L4.400 13.100L6.900 18.600L9.600 17.500L7.300 12.300L11.900 11.900Z" fill="#fff" stroke="#14142a" stroke-width="1" stroke-linejoin="round"/></svg>
<div style="left:8px;top:464px;width:1200px;height:8px;background:#c0c0c0;"></div>
<div style="left:549px;top:464px;width:120px;height:8px;background:#f6f6f6;border:1px solid #8e8e8e;border-bottom-color:#a8a8a8;"></div>
<svg style="left:553px;top:465px" width="112" height="5" viewBox="0 0 112 5"><path d="M0.5 4.800L4 1.500L7.500 4.800M103.500 4.800L107 1.500L110.500 4.800" stroke="#000" stroke-width="1.5" fill="none"/><path d="M10 1.5H98M11 3.5H99" stroke="#3c7fe0" stroke-width="1" stroke-dasharray="1 1.5" fill="none"/></svg>
<div style="left:8px;top:472px;width:1200px;height:218px;background:#fff;"></div>
<div style="left:8px;top:493px;width:1198px;height:197px;background:#fff;border:1px solid #cdcdcd;"></div>
<div style="left:60px;top:474px;width:40px;height:20px;background:#f0f0f0;border:1px solid #d0d0d0;"></div>
<div style="left:9px;top:472px;width:52px;height:22px;background:#fff;border:1px solid #d0d0d0;border-bottom:none;"></div>
<div style="left:11px;top:475px;width:47px;height:17px;border:1px dotted #000;"></div>
<div style="left:12px;top:497px;width:600px;height:21px;background:#0000a0;"></div>
<div style="left:12px;top:518px;width:600px;height:24px;background:#f0f0f0;border-left:1px solid #a0a0a0;"></div>
<svg style="left:16px;top:522px" width="16" height="16" viewBox="0 0 16 16"><circle cx="8" cy="8" r="7.3" fill="url(#gBlue)" stroke="#7ea8da" stroke-width="1"/><path d="M8 3.6V12.4M3.6 8H12.4" stroke="#6f9bd2" stroke-width="3.8"/><path d="M8 4.5V11.5M4.5 8H11.5" stroke="#fff" stroke-width="2"/></svg>
<svg style="left:76px;top:522px" width="16" height="16" viewBox="0 0 16 16"><path d="M1.5 0.5H11.5V12.5H1.5Z" fill="#fbfcff" stroke="#b4c0de"/><path d="M5.2 15L6.2 11.6L12.6 5.2L15 7.6L8.6 14Z" fill="#f8dca8" stroke="#c08a40" stroke-width="0.8"/><path d="M7.4 12.8L13.8 6.4" stroke="#e8a848" stroke-width="0.9"/><path d="M5.2 15L6 12.2L8 14.2Z" fill="#5a4a3a"/></svg>
<svg style="left:132px;top:522px" width="16" height="16" viewBox="0 0 16 16"><circle cx="8" cy="8" r="7.3" fill="url(#gBlue)" stroke="#7ea8da" stroke-width="1"/><path d="M3.6 8H12.4" stroke="#6f9bd2" stroke-width="3.8"/><path d="M4.5 8H11.5" stroke="#fff" stroke-width="2"/></svg>
<svg style="left:193px;top:522px" width="16" height="16" viewBox="0 0 16 16"><circle cx="8" cy="8" r="7.3" fill="url(#gGray)" stroke="#a8a8a8"/><path d="M4.3 8L7 11L11.8 5" stroke="#9c9c9c" stroke-width="2.8" fill="none"/><path d="M4.5 8L7 10.7L11.6 5.2" stroke="#f4f4f4" stroke-width="1.3" fill="none"/></svg>
<svg style="left:251px;top:522px" width="16" height="16" viewBox="0 0 16 16"><circle cx="8" cy="8" r="7.3" fill="url(#gDark)" stroke="#7a7a7a"/><path d="M5.2 5.2L10.8 10.8M10.8 5.2L5.2 10.8" stroke="#ececec" stroke-width="2.7" stroke-linecap="round"/></svg>
<svg style="left:324px;top:522px" width="16" height="16" viewBox="0 0 16 16"><circle cx="8" cy="8" r="7.4" fill="#f2f7e2" stroke="#b4cf74" stroke-width="0.8"/><path d="M12.4 9A4.6 4.6 0 1 1 10.6 4.3" stroke="#86b238" stroke-width="2.6" fill="none"/><path d="M12.2 9A4.4 4.4 0 1 1 10.4 4.5" stroke="#c4de84" stroke-width="0.8" fill="none"/><path d="M8.8 8.8H15.4L12.2 13.6Z" fill="#7aa830"/></svg>
<div style="left:396px;top:520px;width:1px;height:21px;background:#b2b2b2;"></div>
<div style="left:397px;top:520px;width:1px;height:21px;background:#fdfdfd;"></div>
<svg style="left:402px;top:522px" width="16" height="16" viewBox="0 0 16 16"><rect x="0.500" y="0.500" width="14.500" height="9.500" fill="#f4b266" stroke="#f0a050"/><text x="7.800" y="7.400" font-family="Liberation Sans,sans-serif" font-size="6.400" fill="#ffffff" text-anchor="middle" letter-spacing="-0.45">Log</text><rect x="0.500" y="10.700" width="14.500" height="4" fill="#fbfcff" stroke="#7f96cf"/><path d="M3 11V13M5 11V12.500M7 11V13M9 11V12.500M11 11V13M13 11V12.500" stroke="#6c84c4" stroke-width="0.8"/></svg>
<div style="left:12px;top:542px;width:600px;height:145px;background:#fff;border:1px solid #84848c;"></div>
<div style="left:13px;top:543px;width:598px;height:20px;background:#fdfdfe;"></div>
<div style="left:13px;top:562px;width:598px;height:1px;background:#dde6f6;"></div>
<div style="left:13px;top:563px;width:598px;height:19px;background:#a9b9f5;"></div>
<div style="left:13px;top:582px;width:598px;height:1px;background:#a0a0a0;"></div>
<div style="left:13px;top:563px;width:141px;height:19px;background:#d4d0c8;"></div>
<div style="left:154px;top:543px;width:1px;height:20px;background:#dde6f6;"></div>
<div style="left:154px;top:563px;width:1px;height:19px;background:#a0a0a0;"></div>
<div style="left:295px;top:543px;width:1px;height:20px;background:#dde6f6;"></div>
<div style="left:295px;top:563px;width:1px;height:19px;background:#a0a0a0;"></div>
<div style="left:13px;top:662px;width:598px;height:1px;background:#84848c;"></div>
<div style="left:13px;top:663px;width:598px;height:23px;background:#e4e0db;border-top:1px solid #f4f2f0;border-left:1px solid #f4f2f0;"></div>
<div style="left:620px;top:497px;width:584px;height:21px;background:#0000a0;"></div>
<div style="left:620px;top:518px;width:584px;height:24px;background:#f0f0f0;border-left:1px solid #a0a0a0;"></div>
<svg style="left:624px;top:522px" width="16" height="16" viewBox="0 0 16 16"><circle cx="8" cy="8" r="7.3" fill="url(#gBlue)" stroke="#7ea8da" stroke-width="1"/><path d="M8 3.6V12.4M3.6 8H12.4" stroke="#6f9bd2" stroke-width="3.8"/><path d="M8 4.5V11.5M4.5 8H11.5" stroke="#fff" stroke-width="2"/></svg>
<svg style="left:684px;top:522px" width="16" height="16" viewBox="0 0 16 16"><path d="M1.5 0.5H11.5V12.5H1.5Z" fill="#fbfcff" stroke="#b4c0de"/><path d="M5.2 15L6.2 11.6L12.6 5.2L15 7.6L8.6 14Z" fill="#f8dca8" stroke="#c08a40" stroke-width="0.8"/><path d="M7.4 12.8L13.8 6.4" stroke="#e8a848" stroke-width="0.9"/><path d="M5.2 15L6 12.2L8 14.2Z" fill="#5a4a3a"/></svg>
<svg style="left:740px;top:522px" width="16" height="16" viewBox="0 0 16 16"><circle cx="8" cy="8" r="7.3" fill="url(#gBlue)" stroke="#7ea8da" stroke-width="1"/><path d="M3.6 8H12.4" stroke="#6f9bd2" stroke-width="3.8"/><path d="M4.5 8H11.5" stroke="#fff" stroke-width="2"/></svg>
<svg style="left:801px;top:522px" width="16" height="16" viewBox="0 0 16 16"><circle cx="8" cy="8" r="7.3" fill="url(#gGray)" stroke="#a8a8a8"/><path d="M4.3 8L7 11L11.8 5" stroke="#9c9c9c" stroke-width="2.8" fill="none"/><path d="M4.5 8L7 10.7L11.6 5.2" stroke="#f4f4f4" stroke-width="1.3" fill="none"/></svg>
<svg style="left:859px;top:522px" width="16" height="16" viewBox="0 0 16 16"><circle cx="8" cy="8" r="7.3" fill="url(#gDark)" stroke="#7a7a7a"/><path d="M5.2 5.2L10.8 10.8M10.8 5.2L5.2 10.8" stroke="#ececec" stroke-width="2.7" stroke-linecap="round"/></svg>
<svg style="left:932px;top:522px" width="16" height="16" viewBox="0 0 16 16"><circle cx="8" cy="8" r="7.4" fill="#f2f7e2" stroke="#b4cf74" stroke-width="0.8"/><path d="M12.4 9A4.6 4.6 0 1 1 10.6 4.3" stroke="#86b238" stroke-width="2.6" fill="none"/><path d="M12.2 9A4.4 4.4 0 1 1 10.4 4.5" stroke="#c4de84" stroke-width="0.8" fill="none"/><path d="M8.8 8.8H15.4L12.2 13.6Z" fill="#7aa830"/></svg>
<div style="left:1004px;top:520px;width:1px;height:21px;background:#b2b2b2;"></div>
<div style="left:1005px;top:520px;width:1px;height:21px;background:#fdfdfd;"></div>
<svg style="left:1010px;top:522px" width="16" height="16" viewBox="0 0 16 16"><rect x="0.500" y="0.500" width="14.500" height="9.500" fill="#f4b266" stroke="#f0a050"/><text x="7.800" y="7.400" font-family="Liberation Sans,sans-serif" font-size="6.400" fill="#ffffff" text-anchor="middle" letter-spacing="-0.45">Log</text><rect x="0.500" y="10.700" width="14.500" height="4" fill="#fbfcff" stroke="#7f96cf"/><path d="M3 11V13M5 11V12.500M7 11V13M9 11V12.500M11 11V13M13 11V12.500" stroke="#6c84c4" stroke-width="0.8"/></svg>
<div style="left:620px;top:542px;width:584px;height:145px;background:#fff;border:1px solid #84848c;"></div>
<div style="left:621px;top:543px;width:582px;height:20px;background:#fdfdfe;"></div>
<div style="left:621px;top:562px;width:582px;height:1px;background:#dde6f6;"></div>
<div style="left:621px;top:563px;width:582px;height:19px;background:#a9b9f5;"></div>
<div style="left:621px;top:582px;width:582px;height:1px;background:#a0a0a0;"></div>
<div style="left:621px;top:563px;width:93px;height:19px;background:#d4d0c8;"></div>
<div style="left:714px;top:543px;width:1px;height:20px;background:#dde6f6;"></div>
<div style="left:714px;top:563px;width:1px;height:19px;background:#a0a0a0;"></div>
<div style="left:921px;top:543px;width:1px;height:20px;background:#dde6f6;"></div>
<div style="left:921px;top:563px;width:1px;height:19px;background:#a0a0a0;"></div>
<div style="left:1015px;top:543px;width:1px;height:20px;background:#dde6f6;"></div>
<div style="left:1015px;top:563px;width:1px;height:19px;background:#a0a0a0;"></div>
<div style="left:1108px;top:543px;width:1px;height:20px;background:#dde6f6;"></div>
<div style="left:1108px;top:563px;width:1px;height:19px;background:#a0a0a0;"></div>
<div style="left:621px;top:662px;width:582px;height:1px;background:#84848c;"></div>
<div style="left:621px;top:663px;width:582px;height:23px;background:#e4e0db;border-top:1px solid #f4f2f0;border-left:1px solid #f4f2f0;"></div>
<div style="left:1111px;top:665px;width:90px;height:19px;background:#eceef0;border:1px solid #dfe2e6;"></div>
<div style="left:612px;top:497px;width:8px;height:190px;background:#c0c0c0;"></div>
<div style="left:613px;top:584px;width:7px;height:19px;background:#c6c6c6;border-left:1px solid #fff;border-top:1px solid #fff;"></div>
<svg style="left:614px;top:588px" width="5" height="11" viewBox="0 0 5 11"><path d="M4.5 1V10L0 5.500Z" fill="#000"/></svg>
<div style="left:8px;top:690px;width:1200px;height:41px;background:#f0f0f0;"></div>
<div style="left:8px;top:711px;width:1200px;height:1px;background:#dcdcdc;"></div>
<div style="left:211px;top:693px;width:1px;height:17px;background:#dcdcdc;"></div>
<div style="left:665px;top:693px;width:1px;height:17px;background:#dcdcdc;"></div>
<div style="left:769px;top:693px;width:1px;height:17px;background:#dcdcdc;"></div>
<div style="left:90px;top:714px;width:1px;height:16px;background:#d4d4d4;"></div>
<div style="left:318px;top:714px;width:1px;height:16px;background:#d4d4d4;"></div>
<div style="left:907px;top:714px;width:1px;height:16px;background:#d4d4d4;"></div>
<div style="left:320px;top:714px;width:20px;height:16px;background:#efefef;border:1px solid #a4a4a4;"></div>
<svg style="left:322px;top:714px" width="16" height="16" viewBox="0 0 16 16"><ellipse cx="11" cy="8.400" rx="3.200" ry="2.800" fill="#5c9e24"/><circle cx="9.600" cy="3.400" r="2.100" fill="#b06c2c"/><circle cx="9.800" cy="3.900" r="1.100" fill="#f0c080"/><ellipse cx="5.200" cy="11.600" rx="4.300" ry="2.600" fill="#5c9e24"/><ellipse cx="4.800" cy="10.900" rx="3" ry="1.200" fill="#7cbc3c"/><circle cx="5.800" cy="5.600" r="2.700" fill="#b06c2c"/><path d="M4.400 5.200H7.400V8.600H4.400Z" fill="#f8dca8"/><circle cx="11.600" cy="11.400" r="2.600" fill="#fff" stroke="#34508c" stroke-width="1.300" stroke-dasharray="1.300 1.100"/><circle cx="11.600" cy="11.400" r="2.300" fill="#f4f6fc"/><circle cx="11.600" cy="11.400" r="0.900" fill="#34508c"/></svg>
<div style="left:342px;top:714px;width:1px;height:16px;background:#dadada;"></div>
<svg style="left:1197px;top:721px" width="8" height="8" viewBox="0 0 8 8"><g fill="#bfbfbf"><rect x="6" y="0" width="2" height="2"/><rect x="3" y="3" width="2" height="2"/><rect x="6" y="3" width="2" height="2"/><rect x="0" y="6" width="2" height="2"/><rect x="3" y="6" width="2" height="2"/><rect x="6" y="6" width="2" height="2"/></g></svg>
<span id="t0" class="t" style="top:6px;font:normal 15px/20px 'Liberation Sans',sans-serif;color:#3a3a3a;left:532px;letter-spacing:-0.043px;">Empresarial - [Trading]</span>
<span id="t1" class="t" style="top:33px;font:normal 12px/20px 'Liberation Sans',sans-serif;color:#000;left:15px;letter-spacing:-0.245px;"><u>C</u>adastros</span>
<span id="t2" class="t" style="top:33px;font:normal 12px/20px 'Liberation Sans',sans-serif;color:#000;left:79px;letter-spacing:-0.105px;"><u>F</u>inanceiro</span>
<span id="t3" class="t" style="top:33px;font:normal 12px/20px 'Liberation Sans',sans-serif;color:#000;left:146px;letter-spacing:-0.075px;">Organizacional</span>
<span id="t4" class="t" style="top:33px;font:normal 12px/20px 'Liberation Sans',sans-serif;color:#000;left:237px;letter-spacing:0.368px;">Movimento</span>
<span id="t5" class="t" style="top:33px;font:normal 12px/20px 'Liberation Sans',sans-serif;color:#000;left:311px;letter-spacing:-0.840px;">C<u>T</u>RC</span>
<span id="t6" class="t" style="top:33px;font:normal 12px/20px 'Liberation Sans',sans-serif;color:#000;left:353px;letter-spacing:-0.290px;"><u>S</u>erviço</span>
<span id="t7" class="t" style="top:33px;font:normal 12px/20px 'Liberation Sans',sans-serif;color:#000;left:404px;letter-spacing:-0.108px;">C<u>o</u>nfigurações</span>
<span id="t8" class="t" style="top:33px;font:normal 12px/20px 'Liberation Sans',sans-serif;color:#000;left:492px;letter-spacing:-0.278px;">F<u>e</u>rramentas</span>
<span id="t9" class="t" style="top:33px;font:normal 12px/20px 'Liberation Sans',sans-serif;color:#000;left:569px;letter-spacing:-0.203px;"><u>R</u>elatórios</span>
<span id="t10" class="t" style="top:87px;font:normal 12px/20px 'Liberation Sans',sans-serif;color:#000;left:17px;letter-spacing:-0.433px;">Empresa</span>
<span id="t11" class="t" style="top:87px;font:normal 12px/20px 'Liberation Sans',sans-serif;color:#000;left:78.5px;letter-spacing:-0.755px;">Pessoa</span>
<span id="t12" class="t" style="top:87px;font:normal 12px/20px 'Liberation Sans',sans-serif;color:#000;left:131px;letter-spacing:0.164px;">Item</span>
<span id="t13" class="t" style="top:87px;font:normal 12px/20px 'Liberation Sans',sans-serif;color:#000;left:172px;letter-spacing:-0.537px;">Caixa</span>
<span id="t14" class="t" style="top:87px;font:normal 12px/20px 'Liberation Sans',sans-serif;color:#000;left:216px;letter-spacing:-0.339px;">A Receber</span>
<span id="t15" class="t" style="top:87px;font:normal 12px/20px 'Liberation Sans',sans-serif;color:#000;left:285px;letter-spacing:-0.243px;">A Pagar</span>
<span id="t16" class="t" style="top:87px;font:normal 12px/20px 'Liberation Sans',sans-serif;color:#000;left:342px;letter-spacing:-0.672px;">Baixas</span>
<span id="t17" class="t" style="top:87px;font:normal 12px/20px 'Liberation Sans',sans-serif;color:#000;left:390px;letter-spacing:0.368px;">Movimento</span>
<span id="t18" class="t" style="top:87px;font:normal 12px/20px 'Liberation Sans',sans-serif;color:#000;left:468px;letter-spacing:-0.006px;">Consignado</span>
<span id="t19" class="t" style="top:87px;font:normal 12px/20px 'Liberation Sans',sans-serif;color:#000;left:548px;letter-spacing:-0.146px;">Pedido Venda</span>
<span id="t20" class="t" style="top:87px;font:normal 12px/20px 'Liberation Sans',sans-serif;color:#000;left:637px;letter-spacing:-0.832px;">CTRC</span>
<span id="t21" class="t" style="top:87px;font:normal 12px/20px 'Liberation Sans',sans-serif;color:#000;left:683px;letter-spacing:0.108px;">Manifesto</span>
<span id="t22" class="t" style="top:87px;font:normal 12px/20px 'Liberation Sans',sans-serif;color:#000;left:752px;letter-spacing:-0.062px;">Agenda</span>
<span id="t23" class="t" style="top:87px;font:normal 12px/20px 'Liberation Sans',sans-serif;color:#000;left:809px;letter-spacing:-0.137px;">Trocar Usuário</span>
<span id="t24" class="t" style="top:87px;font:normal 12px/20px 'Liberation Sans',sans-serif;color:#000;left:902px;letter-spacing:0.059px;">Ajuda</span>
<span id="t25" class="t" style="top:87px;font:normal 12px/20px 'Liberation Sans',sans-serif;color:#000;left:1176px;letter-spacing:-0.586px;">Sair</span>
<span id="t26" class="t" style="top:110px;font:normal 11px/20px 'Liberation Sans',sans-serif;color:#000;left:16px;letter-spacing:-0.127px;">Trading</span>
<span id="t27" class="t" style="top:131px;font:normal 12px/20px 'Liberation Sans',sans-serif;color:#000;left:32.5px;letter-spacing:-0.266px;"><u>I</u>nserir</span>
<span id="t28" class="t" style="top:131px;font:normal 12px/20px 'Liberation Sans',sans-serif;color:#000;left:91.5px;letter-spacing:-0.310px;"><u>E</u>ditar</span>
<span id="t29" class="t" style="top:131px;font:normal 12px/20px 'Liberation Sans',sans-serif;color:#000;left:148px;letter-spacing:-0.290px;"><u>E</u>xcluir</span>
<span id="t30" class="t" style="top:131px;font:normal 12px/20px 'Liberation Sans',sans-serif;color:#8a8a8a;left:209px;letter-spacing:-0.505px;"><u>S</u>alvar</span>
<span id="t31" class="t" style="top:131px;font:normal 12px/20px 'Liberation Sans',sans-serif;color:#8a8a8a;left:267px;letter-spacing:-0.254px;"><u>C</u>ancelar</span>
<span id="t32" class="t" style="top:131px;font:normal 12px/20px 'Liberation Sans',sans-serif;color:#000;left:340px;letter-spacing:-0.078px;"><u>A</u>tualizar</span>
<span id="t33" class="t" style="top:131px;font:normal 12px/20px 'Liberation Sans',sans-serif;color:#000;left:614.5px;letter-spacing:-0.095px;">Consultar</span>
<span id="t34" class="t" style="top:131px;font:normal 12px/20px 'Liberation Sans',sans-serif;color:#000;left:1125px;letter-spacing:-0.315px;">Fechar a janela</span>
<span id="t35" class="t" style="top:154px;font:bold 13px/20px 'Liberation Sans',sans-serif;color:#fff;left:11px;letter-spacing:-0.065px;">Trading</span>
<span id="t36" class="t" style="top:153px;font:normal 11px/20px 'Liberation Sans',sans-serif;color:#fff;left:413px;letter-spacing:-0.262px;">| Cadastrado em:</span>
<span id="t37" class="t" style="top:153px;font:bold 11px/20px 'Liberation Sans',sans-serif;color:#fff;left:499px;letter-spacing:-0.166px;">01/02/2018 09:51:18</span>
<span id="t38" class="t" style="top:153px;font:normal 11px/20px 'Liberation Sans',sans-serif;color:#fff;left:625px;letter-spacing:-0.375px;">Por</span>
<span id="t39" class="t" style="top:153px;font:bold 11px/20px 'Liberation Sans',sans-serif;color:#fff;left:651px;letter-spacing:0.342px;">Augusto</span>
<span id="t40" class="t" style="top:153px;font:normal 11px/20px 'Liberation Sans',sans-serif;color:#fff;left:774px;letter-spacing:-0.042px;">|Atualizado em:</span>
<span id="t41" class="t" style="top:153px;font:bold 11px/20px 'Liberation Sans',sans-serif;color:#fff;left:855px;letter-spacing:-0.166px;">01/02/2018 09:51:18</span>
<span id="t42" class="t" style="top:153px;font:normal 11px/20px 'Liberation Sans',sans-serif;color:#fff;left:981px;letter-spacing:-0.375px;">Por</span>
<span id="t43" class="t" style="top:179px;font:bold 11px/20px 'Liberation Sans',sans-serif;color:#000;left:174px;letter-spacing:0.185px;">Código</span>
<span id="t44" class="t" style="top:202px;font:bold 11px/20px 'Liberation Sans',sans-serif;color:#000;left:190px;letter-spacing:-0.211px;">Data</span>
<span id="t45" class="t" style="top:225px;font:bold 11px/20px 'Liberation Sans',sans-serif;color:#000;left:174px;letter-spacing:0.330px;">Cliente</span>
<span id="t46" class="t" style="top:248px;font:normal 11px/20px 'Liberation Sans',sans-serif;color:#000;left:147px;letter-spacing:-0.144px;">Consignatário</span>
<span id="t47" class="t" style="top:271px;font:normal 11px/20px 'Liberation Sans',sans-serif;color:#000;left:156px;letter-spacing:-0.091px;">Notificado 1</span>
<span id="t48" class="t" style="top:294px;font:normal 11px/20px 'Liberation Sans',sans-serif;color:#000;left:156px;letter-spacing:-0.091px;">Notificado 2</span>
<span id="t49" class="t" style="top:317px;font:bold 11px/20px 'Liberation Sans',sans-serif;color:#000;left:159px;letter-spacing:0.484px;">Vendedor</span>
<span id="t50" class="t" style="top:340px;font:bold 11px/20px 'Liberation Sans',sans-serif;color:#000;left:145px;letter-spacing:0.258px;">Comissão %</span>
<span id="t51" class="t" style="top:363px;font:bold 11px/20px 'Liberation Sans',sans-serif;color:#000;left:158px;letter-spacing:0.472px;">Referente</span>
<span id="t52" class="t" style="top:386px;font:bold 11px/20px 'Liberation Sans',sans-serif;color:#000;left:185px;letter-spacing:0.216px;">Série</span>
<span id="t53" class="t" style="top:409px;font:bold 11px/20px 'Liberation Sans',sans-serif;color:#000;left:169px;letter-spacing:0.406px;">Número</span>
<span id="t54" class="t" style="top:179px;font:bold 11px/20px 'Liberation Sans',sans-serif;color:#000;right:901px;">4</span>
<span id="t55" class="t" style="top:202px;font:bold 11px/20px 'Liberation Sans',sans-serif;color:#000;left:231px;letter-spacing:-0.106px;">01/02/2018</span>
<span id="t56" class="t" style="top:225px;font:bold 11px/20px 'Liberation Sans',sans-serif;color:#000;right:917.5px;">1</span>
<span id="t57" class="t" style="top:317px;font:bold 11px/20px 'Liberation Sans',sans-serif;color:#000;right:917.5px;">4056</span>
<span id="t58" class="t" style="top:340px;font:bold 11px/20px 'Liberation Sans',sans-serif;color:#000;right:901px;">5,00</span>
<span id="t59" class="t" style="top:386px;font:bold 11px/20px 'Liberation Sans',sans-serif;color:#000;right:917.5px;">40</span>
<span id="t60" class="t" style="top:363px;font:bold 11px/20px 'Liberation Sans',sans-serif;color:#000;left:231px;letter-spacing:-0.148px;">COMPRA</span>
<span id="t61" class="t" style="top:227px;font:bold 11px/20px 'DejaVu Sans Condensed','DejaVu Sans',sans-serif;color:#000;left:341.5px;letter-spacing:0.048px;">1 - CLIENTE PADRAO - 90.108.382/0001-64  -  CANOAS/RS</span>
<span id="t62" class="t" style="top:319px;font:bold 11px/20px 'DejaVu Sans Condensed','DejaVu Sans',sans-serif;color:#000;left:341.5px;letter-spacing:0.055px;">AUGUSTO ELIAS</span>
<span id="t63" class="t" style="top:387px;font:bold 11px/20px 'DejaVu Sans Condensed','DejaVu Sans',sans-serif;color:#000;left:341.5px;letter-spacing:-0.018px;">SERIE TRADING</span>
<span id="t64" class="t" style="top:179px;font:normal 11px/20px 'Liberation Sans',sans-serif;color:#000;left:868px;letter-spacing:-0.208px;">Situação:</span>
<span id="t65" class="t" style="top:180px;font:bold 11px/20px 'DejaVu Sans Condensed','DejaVu Sans',sans-serif;color:#000;left:931px;letter-spacing:-0.635px;">PENDENTE</span>
<span id="t66" class="t" style="top:472px;font:normal 11px/20px 'Liberation Sans',sans-serif;color:#000;left:16px;letter-spacing:-0.354px;">Compra</span>
<span id="t67" class="t" style="top:474px;font:normal 11px/20px 'Liberation Sans',sans-serif;color:#000;left:65px;letter-spacing:-0.041px;">Venda</span>
<span id="t68" class="t" style="top:498px;font:bold 13px/20px 'Liberation Sans',sans-serif;color:#fff;left:14.5px;letter-spacing:0.098px;">Fornecedor</span>
<span id="t69" class="t" style="top:520px;font:normal 12px/20px 'Liberation Sans',sans-serif;color:#000;left:36.5px;letter-spacing:-0.263px;">Inserir</span>
<span id="t70" class="t" style="top:520px;font:normal 12px/20px 'Liberation Sans',sans-serif;color:#000;left:95.5px;letter-spacing:-0.310px;">Editar</span>
<span id="t71" class="t" style="top:520px;font:normal 12px/20px 'Liberation Sans',sans-serif;color:#000;left:152px;letter-spacing:-0.288px;">Excluir</span>
<span id="t72" class="t" style="top:520px;font:normal 12px/20px 'Liberation Sans',sans-serif;color:#8a8a8a;left:213px;letter-spacing:-0.503px;">Salvar</span>
<span id="t73" class="t" style="top:520px;font:normal 12px/20px 'Liberation Sans',sans-serif;color:#8a8a8a;left:271px;letter-spacing:-0.254px;">Cancelar</span>
<span id="t74" class="t" style="top:520px;font:normal 12px/20px 'Liberation Sans',sans-serif;color:#000;left:344px;letter-spacing:-0.076px;">Atualizar</span>
<span id="t75" class="t" style="top:543px;font:bold 11px/20px 'Liberation Sans',sans-serif;color:#000;left:16.5px;letter-spacing:-0.336px;">Data</span>
<span id="t76" class="t" style="top:543px;font:bold 11px/20px 'Liberation Sans',sans-serif;color:#000;left:158.5px;letter-spacing:0.328px;">Pessoa</span>
<span id="t77" class="t" style="top:543px;font:bold 11px/20px 'Liberation Sans',sans-serif;color:#000;left:299.5px;letter-spacing:-0.266px;">Nome</span>
<span id="t78" class="t" style="top:562px;font:normal 11px/20px 'Liberation Sans',sans-serif;color:#000;left:15.5px;letter-spacing:-0.156px;">01/02/2018</span>
<span id="t79" class="t" style="top:562px;font:normal 11px/20px 'Liberation Sans',sans-serif;color:#000;right:923px;">1252</span>
<span id="t80" class="t" style="top:562px;font:normal 11px/20px 'Liberation Sans',sans-serif;color:#000;left:298.5px;letter-spacing:-0.593px;">UNILEVER BRASIL GELADOS DO NORDESTE</span>
<span id="t81" class="t" style="top:498px;font:bold 13px/20px 'Liberation Sans',sans-serif;color:#fff;left:622.5px;letter-spacing:-0.133px;">Produtos</span>
<span id="t82" class="t" style="top:520px;font:normal 12px/20px 'Liberation Sans',sans-serif;color:#000;left:644.5px;letter-spacing:-0.263px;">Inserir</span>
<span id="t83" class="t" style="top:520px;font:normal 12px/20px 'Liberation Sans',sans-serif;color:#000;left:703.5px;letter-spacing:-0.310px;">Editar</span>
<span id="t84" class="t" style="top:520px;font:normal 12px/20px 'Liberation Sans',sans-serif;color:#000;left:760px;letter-spacing:-0.288px;">Excluir</span>
<span id="t85" class="t" style="top:520px;font:normal 12px/20px 'Liberation Sans',sans-serif;color:#8a8a8a;left:821px;letter-spacing:-0.503px;">Salvar</span>
<span id="t86" class="t" style="top:520px;font:normal 12px/20px 'Liberation Sans',sans-serif;color:#8a8a8a;left:879px;letter-spacing:-0.254px;">Cancelar</span>
<span id="t87" class="t" style="top:520px;font:normal 12px/20px 'Liberation Sans',sans-serif;color:#000;left:952px;letter-spacing:-0.076px;">Atualizar</span>
<span id="t88" class="t" style="top:543px;font:bold 11px/20px 'Liberation Sans',sans-serif;color:#000;left:624.5px;letter-spacing:-0.565px;">Código</span>
<span id="t89" class="t" style="top:543px;font:bold 11px/20px 'Liberation Sans',sans-serif;color:#000;left:718.5px;letter-spacing:-0.266px;">Nome</span>
<span id="t90" class="t" style="top:543px;font:bold 11px/20px 'Liberation Sans',sans-serif;color:#000;left:925.5px;letter-spacing:-0.625px;">Qtid</span>
<span id="t91" class="t" style="top:543px;font:bold 11px/20px 'Liberation Sans',sans-serif;color:#000;left:1019.5px;letter-spacing:0.319px;">Valor</span>
<span id="t92" class="t" style="top:543px;font:bold 11px/20px 'Liberation Sans',sans-serif;color:#000;left:1112.5px;letter-spacing:0.098px;">Valor Total</span>
<span id="t93" class="t" style="top:562px;font:normal 11px/20px 'Liberation Sans',sans-serif;color:#000;right:505px;">1</span>
<span id="t94" class="t" style="top:562px;font:normal 11px/20px 'Liberation Sans',sans-serif;color:#000;left:717.5px;letter-spacing:-0.607px;">PRODUTO PADRAO</span>
<span id="t95" class="t" style="top:562px;font:normal 11px/20px 'Liberation Sans',sans-serif;color:#000;right:203px;">1.000,00</span>
<span id="t96" class="t" style="top:562px;font:normal 11px/20px 'Liberation Sans',sans-serif;color:#000;right:110px;">2,7500000</span>
<span id="t97" class="t" style="top:562px;font:normal 11px/20px 'Liberation Sans',sans-serif;color:#000;right:16px;">2.750,00</span>
<span id="t98" class="t" style="top:664px;font:normal 11px/20px 'Liberation Sans',sans-serif;color:#000;right:18px;">2.750,00</span>
<span id="t99" class="t" style="top:692px;font:normal 11px/20px 'Liberation Sans',sans-serif;color:#000;left:10.5px;letter-spacing:-0.233px;">TradingForm</span>
<span id="t100" class="t" style="top:692px;font:normal 11px/20px 'Liberation Sans',sans-serif;color:#000;left:772px;letter-spacing:-0.125px;">tbl_trading</span>
<span id="t101" class="t" style="top:712px;font:normal 11px/20px 'Liberation Sans',sans-serif;color:#000;left:11px;letter-spacing:-0.306px;">1.2.2.4</span>
<span id="t102" class="t" style="top:712px;font:normal 11px/20px 'Liberation Sans',sans-serif;color:#000;left:93px;letter-spacing:0.077px;">2 - Augusto</span>
<span id="t103" class="t" style="top:712px;font:bold 11px/20px 'Liberation Sans',sans-serif;color:#000;left:345px;letter-spacing:-0.081px;">Emp: 000001 AUTOCOM INFORMÁTICA - Estab: 000001 AUTOCOM AUTOMAÇÃO</span>
<span id="t104" class="t" style="top:712px;font:bold 11px/20px 'Liberation Sans',sans-serif;color:#000;left:910px;letter-spacing:-0.032px;">Periodo: 01/01/2018 à 31/01/2018</span>
</div></body></html>
